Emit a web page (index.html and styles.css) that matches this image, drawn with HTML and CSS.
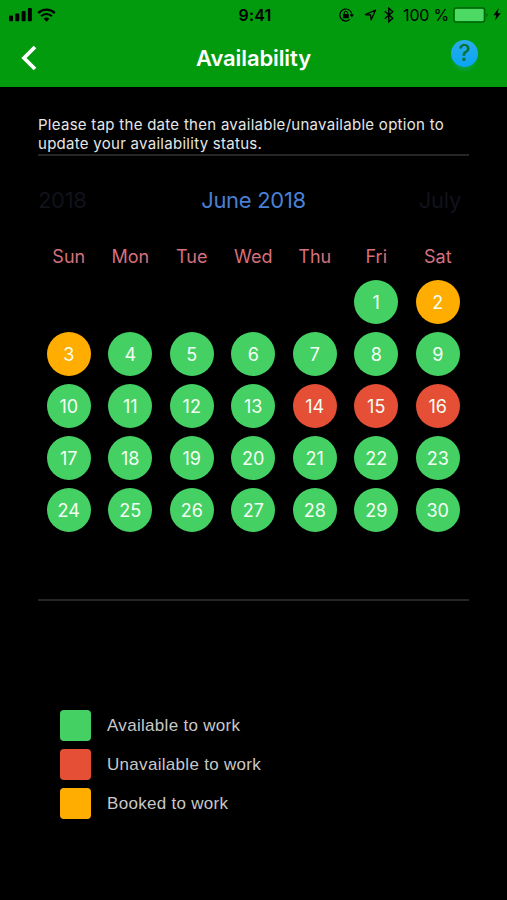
FILE: index.html
```html
<!DOCTYPE html>
<html lang="en">
<head>
  <meta charset="UTF-8" />
  <meta name="viewport" content="width=device-width, initial-scale=1.0"/>
  <title>Availability</title>
  <link rel="stylesheet" href="styles.css">
</head>
<body>
  <header class="top">
    <div class="status-bar">
      <div class="status-left">
        <svg width="23" height="14" viewBox="0 0 23 14">
          <rect x="0" y="7.5" width="4" height="5.8" rx="1"/>
          <rect x="6.3" y="5.5" width="4" height="7.8" rx="1"/>
          <rect x="12.6" y="3" width="4" height="10.3" rx="1"/>
          <rect x="18.9" y="0" width="4" height="13.3" rx="1"/>
        </svg>
        <svg width="19" height="14" viewBox="0 0 19 14">
          <path d="M1.2 5.1a11.8 11.8 0 0 1 16.6 0" fill="none" stroke="#000" stroke-width="2.3"/>
          <path d="M4.1 8.2a7.7 7.7 0 0 1 10.8 0" fill="none" stroke="#000" stroke-width="2.2"/>
          <path d="M6.6 10.8a4.2 4.2 0 0 1 5.8 0L9.5 13.7z"/>
        </svg>
      </div>
      <span class="time">9:41</span>
      <div class="status-right">
        <svg width="15" height="14" viewBox="0 0 15 14">
          <path d="M11 11.4a6 6 0 1 1 1.9-4.2" fill="none" stroke="#000" stroke-width="1.2"/>
          <path d="M10.6 6.6h4.4l-2.2 2.9z"/>
          <rect x="4" y="6" width="5.8" height="4.2" rx=".5"/>
          <path d="M5.2 6.2V5a1.7 1.7 0 0 1 3.4 0v1.2" fill="none" stroke="#000"/>
        </svg>
        <svg class="icon-location" width="13" height="12" viewBox="0 0 13 12">
          <path d="M1.3 5.6 11.6 1 7.1 10.9 6.6 6z" fill="none" stroke="#000" stroke-width="1.3" stroke-linejoin="round"/>
        </svg>
        <svg class="icon-bluetooth" width="10" height="16" viewBox="0 0 10 16">
          <path d="M.8 4.3 8.7 11.2 4.8 14.8V1.2L8.7 4.8.8 11.7" fill="none" stroke="#000" stroke-width="1.4"/>
        </svg>
        <span class="percent">100 %</span>
        <svg class="icon-battery" width="36" height="16" viewBox="0 0 36 16">
          <rect x=".8" y=".8" width="31" height="14.4" rx="2.5" fill="none" stroke="#045f0b" stroke-width="1.2"/>
          <rect x="2" y="2" width="28.5" height="12" rx="1.2" fill="#4cda64"/>
          <path d="M33.4 5.5q2.4 2.5 0 5z" fill="#045f0b"/>
        </svg>
        <svg class="icon-bolt" width="8" height="13" viewBox="0 0 8 13">
          <path d="M5.7 0 .4 7.2h2.9L2 12.6l5.7-7.4H4.6z"/>
        </svg>
      </div>
    </div>
    <div class="nav-bar">
      <svg class="back" width="16" height="26" viewBox="0 0 16 26">
        <path d="M14 2 3 13 14 24" fill="none" stroke="#fff" stroke-width="3.8"/>
      </svg>
      <h1>Availability</h1>
      <div class="help">?</div>
    </div>
  </header>

  <main>
    <p class="hint">Please tap the date then available/unavailable option to<br>update your availability status.</p>

    <div class="calendar">
      <div class="months">
        <span class="month faded">2018</span>
        <span class="month">June 2018</span>
        <span class="month faded next">July</span>
      </div>
      <div class="weekdays">
        <span>Sun</span><span>Mon</span><span>Tue</span><span>Wed</span><span>Thu</span><span>Fri</span><span>Sat</span>
      </div>
      <div class="days" id="days"></div>
    </div>

    <ul class="legend">
      <li><i class="swatch available"></i>Available to work</li>
      <li><i class="swatch unavailable"></i>Unavailable to work</li>
      <li><i class="swatch booked"></i>Booked to work</li>
    </ul>
  </main>

  <script>
    const days = document.getElementById('days');
    const booked = [2, 3];
    const unavailable = [14, 15, 16];

    for (let d = 1; d <= 30; d++) {
      const day = document.createElement('span');
      let status = 'available';
      if (booked.includes(d)) status = 'booked';
      if (unavailable.includes(d)) status = 'unavailable';
      day.className = `day ${status}`;
      day.textContent = d;
      days.appendChild(day);
    }
  </script>
</body>
</html>
```
FILE: styles.css
```css
html, body {
  margin: 0;
  padding: 0;
  font-family: Inter, sans-serif;
  background-color: #000;
  color: white;
  height: 100%;
}

body {
  overflow: hidden;
}

svg {
  display: block;
  flex: none;
}

.top {
  height: 87px;
  background-color: #039b0e;
}

.status-bar {
  display: grid;
  grid-template-columns: 1fr auto 1fr;
  align-items: center;
  height: 29px;
  padding: 0 6px 0 9px;
  color: #000;
}

.status-left {
  display: flex;
  align-items: center;
  gap: 5px;
}

.time {
  font-size: 16px;
  font-weight: 600;
  letter-spacing: 0.2px;
}

.status-right {
  display: flex;
  align-items: center;
  justify-content: flex-end;
}

.icon-location {
  margin-left: 10px;
}

.icon-bluetooth {
  margin-left: 7px;
}

.percent {
  margin-left: 9px;
  font-size: 16px;
  letter-spacing: -0.2px;
  white-space: nowrap;
}

.icon-battery {
  margin-left: 4px;
}

.icon-bolt {
  margin-left: 4px;
}

.nav-bar {
  display: grid;
  grid-template-columns: 1fr auto 1fr;
  align-items: center;
  height: 57px;
  padding: 0 21px;
}

h1 {
  margin: 0;
  font-size: 22px;
  font-weight: 600;
  letter-spacing: -0.1px;
  line-height: 28px;
}

.help {
  justify-self: end;
  width: 27px;
  height: 27px;
  margin: 0 8px 9px 0;
  border-radius: 50%;
  background: linear-gradient(#2cabe8, #08a5f4);
  box-shadow: 0 6px 4px -3px #12a04a;
  color: #05703a;
  font-size: 23px;
  font-weight: 500;
  line-height: 27px;
  text-align: center;
}

main {
  padding: 28px 38px 0;
}

.hint {
  margin: 0;
  padding-bottom: 1px;
  border-bottom: 2px solid #262626;
  color: #e6e6e6;
  font-size: 15px;
  letter-spacing: 0.28px;
  line-height: 19px;
}

.calendar {
  height: 443px;
  border-bottom: 2px solid #262626;
}

.months {
  display: grid;
  grid-template-columns: 1fr auto 1fr;
  padding-top: 29px;
  font-size: 22px;
  letter-spacing: -0.3px;
  line-height: 30px;
}

.month {
  color: #4a7fd4;
}

.faded {
  color: #10121c;
}

.next {
  padding-right: 8px;
  text-align: right;
}

.weekdays, .days {
  display: grid;
  grid-template-columns: repeat(7, 61.5px);
  justify-items: center;
}

.weekdays {
  margin-top: 30px;
  color: #d6707c;
  font-size: 18px;
  line-height: 24px;
}

.days {
  row-gap: 8px;
  margin-top: 11px;
}

.day {
  width: 44px;
  height: 44px;
  border-radius: 50%;
  color: #f4fff4;
  font-size: 18px;
  line-height: 45px;
  text-align: center;
}

/* June 2018 starts on a Friday */
.day:first-child {
  grid-column-start: 6;
}

.available {
  background-color: #45d064;
}

.unavailable {
  background-color: #e44f36;
}

.booked {
  background-color: #ffad00;
}

.legend {
  display: flex;
  flex-direction: column;
  gap: 8px;
  margin: 109px 0 0;
  padding: 0 0 0 22px;
  list-style: none;
}

.legend li {
  display: flex;
  align-items: center;
  gap: 16px;
  color: #c8c8c8;
  font-family: "Liberation Sans", sans-serif;
  font-size: 17px;
  letter-spacing: 0.3px;
}

.swatch {
  width: 31px;
  height: 31px;
  border-radius: 4px;
}
```
